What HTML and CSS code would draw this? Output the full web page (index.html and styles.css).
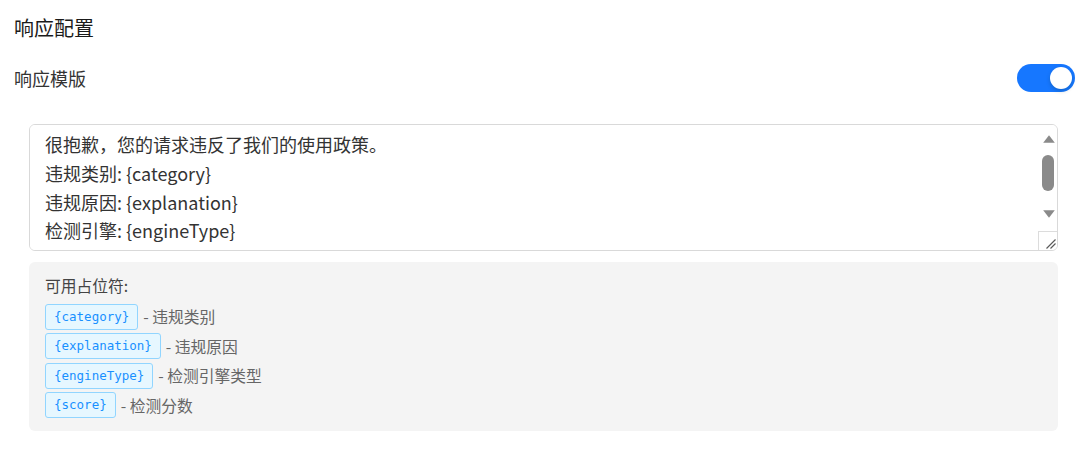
FILE: index.html
```html
<!DOCTYPE html>
<html>
<head>
    <title>响应配置</title>
    <meta charset="utf-8">
    <meta name="viewport" content="width=device-width, initial-scale=1">
    <link rel="stylesheet" href="styles.css">
</head>
<body>
    <div class="section">
        <h3 class="title">响应配置</h3>
        <div class="row">
            <span class="label">响应模版</span>
            <span class="switch on"><span class="knob"></span></span>
        </div>
        <div class="editor">
            <div class="template-box">
                <textarea class="template" spellcheck="false">很抱歉，您的请求违反了我们的使用政策。
违规类别: {category}
违规原因: {explanation}
检测引擎: {engineType}
检测分数: {score}</textarea>
                <div class="scrollbar">
                    <div class="sb-btn sb-up">
                        <svg width="12" height="8" viewBox="0 0 12 8"><path d="M6 0.3 L11.8 7.8 L0.2 7.8 Z" fill="#8a8a8a"/></svg>
                    </div>
                    <div class="sb-track"><div class="sb-thumb"></div></div>
                    <div class="sb-btn sb-down">
                        <svg width="12" height="8" viewBox="0 0 12 8"><path d="M0.2 0.2 L11.8 0.2 L6 7.7 Z" fill="#8a8a8a"/></svg>
                    </div>
                    <div class="sb-corner">
                        <svg width="19" height="19" viewBox="0 0 19 19">
                            <path d="M8.5 17.5 L17.5 8.5 M12.5 17.5 L17.5 12.5" stroke="#5a5a5a" stroke-width="1.2" fill="none"/>
                        </svg>
                    </div>
                </div>
            </div>
            <div class="vars">
                <div class="vars-title">可用占位符:</div>
                <div class="var"><code>{category}</code> - 违规类别</div>
                <div class="var"><code>{explanation}</code> - 违规原因</div>
                <div class="var"><code>{engineType}</code> - 检测引擎类型</div>
                <div class="var"><code>{score}</code> - 检测分数</div>
            </div>
        </div>
    </div>
</body>
</html>
```

FILE: styles.css
```css
body {
    margin: 0;
    font-family: "Noto Sans CJK SC", "Noto Sans", sans-serif;
    color: #333;
    background: #fff;
}
.section {
    padding: 14px 10px 0 14px;
}
.title {
    margin: 0;
    font-size: 20px;
    font-weight: 400;
    line-height: 28px;
    color: #1a1a1a;
}
.row {
    display: flex;
    justify-content: space-between;
    align-items: center;
    height: 28px;
    margin-top: 22px;
}
.label {
    font-size: 18px;
    color: #333;
}
.switch {
    width: 58px;
    height: 28px;
    border-radius: 14px;
    background: #1677ff;
    display: flex;
    align-items: center;
    justify-content: flex-end;
    padding: 0 3px;
    box-sizing: border-box;
}
.knob {
    width: 22px;
    height: 22px;
    border-radius: 50%;
    background: #fff;
    box-shadow: 0 2px 4px rgba(0, 35, 11, 0.2);
}
.editor {
    margin: 32px 17px 0 15px;
}
.template-box {
    display: flex;
    height: 127px;
    box-sizing: border-box;
    border: 1px solid #d9d9d9;
    border-radius: 6px;
    overflow: hidden;
    background: #fff;
}
.template {
    flex: 1;
    display: block;
    box-sizing: border-box;
    padding: 5px 15px;
    border: none;
    font-family: inherit;
    font-size: 18px;
    line-height: 28.8px;
    color: #333;
    resize: none;
    outline: none;
    overflow: hidden;
}

/* fake windows scrollbar */
.scrollbar {
    width: 19px;
    display: flex;
    flex-direction: column;
    background: #fff;
}
.sb-btn {
    height: 25px;
    display: flex;
    justify-content: center;
    box-sizing: border-box;
    padding-left: 2px;
}
.sb-btn svg {
    display: block;
}
.sb-up {
    align-items: flex-end;
    padding-bottom: 7px;
}
.sb-down {
    align-items: flex-start;
    padding-top: 4px;
}
.sb-track {
    flex: 1;
    padding-top: 5px;
    display: flex;
    justify-content: center;
    padding-left: 1px;
}
.sb-thumb {
    width: 12px;
    height: 36px;
    border-radius: 6px;
    background: #8a8a8a;
}
.sb-corner {
    height: 19px;
    border-top: 1px solid #dcdcdc;
    border-left: 1px solid #dcdcdc;
    box-sizing: border-box;
}
.sb-corner svg {
    display: block;
    margin: -1px 0 0 -1px;
}

.vars {
    margin-top: 11px;
    background: #f4f4f4;
    border-radius: 6px;
    padding: 12px 16px 12px 16px;
    height: 169px;
    box-sizing: border-box;
}
.vars-title {
    font-size: 15.75px;
    line-height: 24px;
    color: #444;
    margin-bottom: 4px;
}
.var {
    display: flex;
    align-items: center;
    height: 29.5px;
    font-size: 15.75px;
    color: #666;
}
.var code {
    font-family: "DejaVu Sans Mono", monospace;
    font-size: 12.5px;
    color: #1890ff;
    background: #e6f7ff;
    border: 1px solid #91d5ff;
    border-radius: 3px;
    padding: 0 8px;
    height: 26px;
    line-height: 24px;
    box-sizing: border-box;
    margin-right: 5px;
}
```
